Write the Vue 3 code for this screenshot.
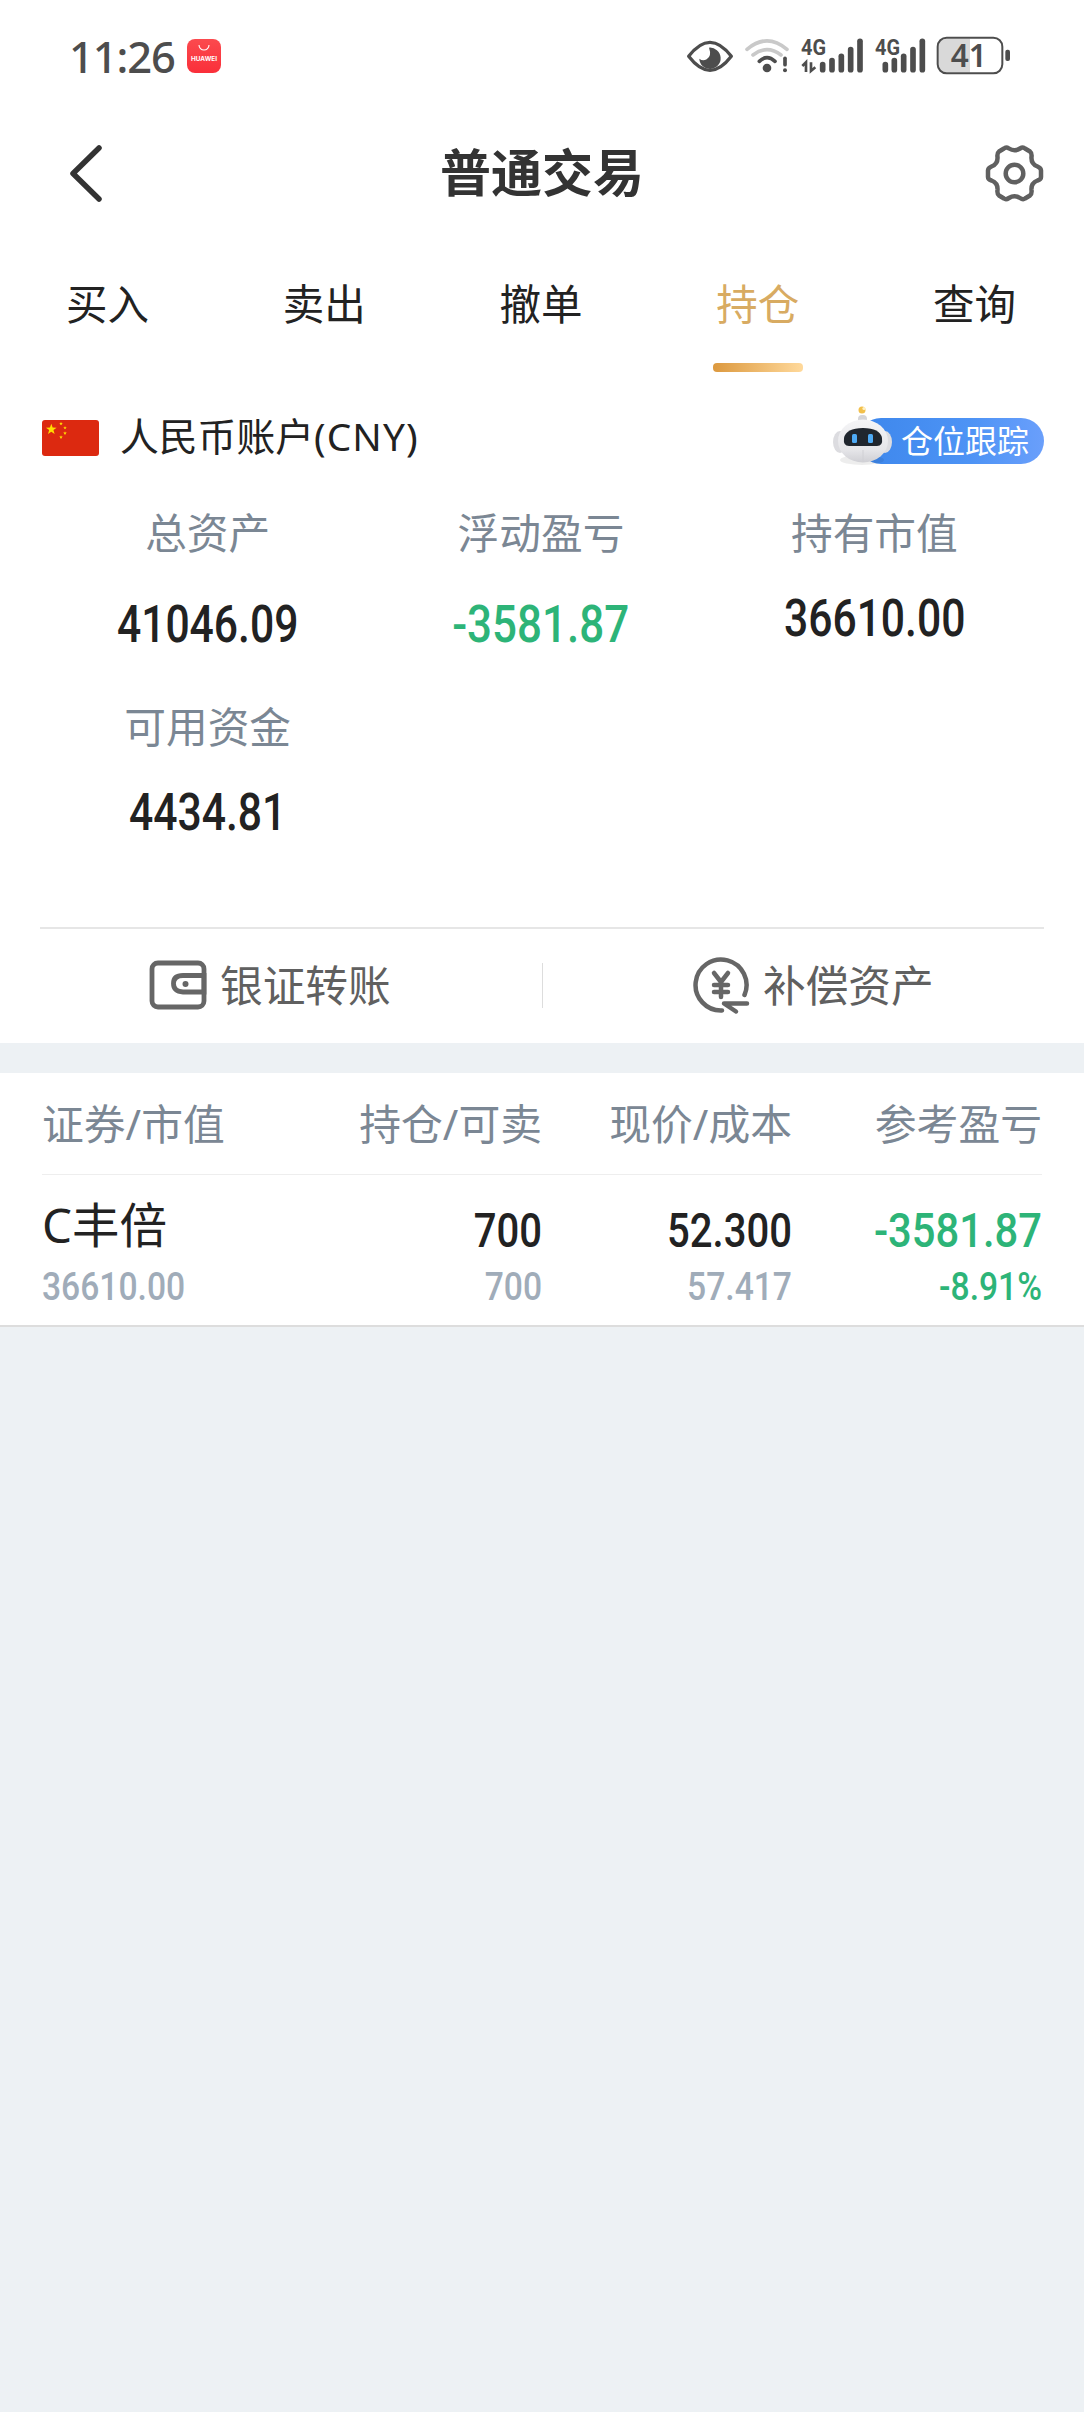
<template>
  <div class="page">
    <header class="status-bar">
      <div class="status-bar__left">
        <span class="status-bar__time">11:26</span>
        <div class="status-bar__app">
          <svg viewBox="0 0 34 34" width="34" height="34">
            <path d="M12 6a5 5 0 0 0 10 0" fill="none" stroke="#fff" stroke-width="1.1" />
            <text x="17" y="21.6" text-anchor="middle" textLength="26" lengthAdjust="spacingAndGlyphs" class="status-bar__brand">HUAWEI</text>
          </svg>
        </div>
      </div>
      <svg class="status-bar__icons" viewBox="0 0 1080 240" width="360" height="80">
        <!-- eye -->
        <path d="M56 109Q120 25 184 109Q120 193 56 109Z" fill="none" stroke="#4d4d4d" stroke-width="10" stroke-linejoin="round" />
        <path d="M117 83A32 32 0 1 1 88 116Q98 124 110 118Q126 108 117 83Z" fill="#4d4d4d" />
        <!-- wifi -->
        <g fill="none" stroke-width="11" stroke-linecap="round">
          <path d="M231 88Q291 37 351 88" stroke="#c9c9c9" />
          <path d="M249 105Q291 73 333 105" stroke="#c9c9c9" />
          <path d="M268 124Q291 102 315 124" stroke="#4d4d4d" />
          <path d="M345 115V134" stroke="#4d4d4d" />
        </g>
        <circle cx="291" cy="144" r="13" fill="#4d4d4d" />
        <circle cx="345" cy="151" r="6" fill="#4d4d4d" />
        <!-- cellular -->
        <text x="393" y="105" textLength="75" lengthAdjust="spacingAndGlyphs" class="status-bar__net">4G</text>
        <text x="615" y="105" textLength="75" lengthAdjust="spacingAndGlyphs" class="status-bar__net">4G</text>
        <path d="M397 138L408 127V156M423 127V153L436 142" fill="none" stroke="#4d4d4d" stroke-width="8" />
        <g stroke="#4d4d4d" stroke-width="17" stroke-linecap="round">
          <path v-for="bar in signalBars" :key="bar.x" :d="`M${bar.x} ${bar.y}V149`" />
        </g>
        <!-- battery -->
        <path d="M900 57H828Q805 57 805 80V134Q805 157 828 157H900Z" fill="#d9d9d9" />
        <rect x="803" y="53" width="194" height="107" rx="27" fill="none" stroke="#4d4d4d" stroke-width="6" />
        <rect x="1006" y="89" width="14" height="34" rx="6" fill="#4d4d4d" />
        <text x="842" y="141" textLength="108" lengthAdjust="spacingAndGlyphs" class="status-bar__level">41</text>
      </svg>
    </header>

    <nav class="title-bar">
      <svg viewBox="0 0 60 60" width="60" height="60">
        <path d="M44 5L18 30.500L44 56" fill="none" stroke="#333" stroke-width="5.500" stroke-linecap="round" stroke-linejoin="round" />
      </svg>
      <h1 class="title-bar__title">普通交易</h1>
      <svg viewBox="0 0 60 60" width="60" height="60">
        <path d="M20 5.500Q22 3.500 25 5.500Q30.500 9 36 5.500Q39 3.500 41 5.500L46 8.500Q48 10 47.500 14Q47 21 53.500 23.500Q57 25 57 27.500V34Q57 36.500 53.500 37.500Q47 40 47.500 47Q48 51 46 52.500L41 55.500Q39 57 36 55Q30.500 51.500 25 55Q22 57 20 55.500L15 52.500Q13 51 13.500 47Q14 40 7.500 37.500Q4 36.500 4 34V27.500Q4 25 7.500 23.500Q14 21 13.500 14Q13 10 15 8.500Z" fill="none" stroke="#606060" stroke-width="4.500" stroke-linejoin="round" />
        <circle cx="30.500" cy="30.500" r="8.800" fill="none" stroke="#606060" stroke-width="4.500" />
      </svg>
    </nav>

    <div class="tabs">
      <div
        class="tabs__item"
        :class="{ 'tabs__item--active': tab === activeTab }"
        v-for="tab in tabs"
        :key="tab"
      >
        {{ tab }}
      </div>
    </div>

    <section class="account">
      <div class="account__header">
        <svg class="account__flag" viewBox="0 0 57 36" width="57" height="36">
          <rect width="57" height="36" rx="3" fill="#dc2910" />
          <g fill="#ffde00">
            <polygon :points="star(9.3, 9.4, 5.6)" />
            <polygon :points="star(19, 3.7, 1.9)" />
            <polygon :points="star(23, 7.8, 1.9)" />
            <polygon :points="star(23, 13.2, 1.9)" />
            <polygon :points="star(19, 17.2, 1.9)" />
          </g>
        </svg>
        <span class="account__name">人民币账户<span class="account__currency">(CNY)</span></span>
        <div class="tracker">
          <svg class="tracker__robot" viewBox="0 0 66 70" width="66" height="70">
            <defs>
              <linearGradient id="head" x1="0" y1="0" x2="0" y2="1">
                <stop offset="0" stop-color="#f5f5f7" />
                <stop offset=".7" stop-color="#e6e6e9" />
                <stop offset="1" stop-color="#cfcfd4" />
              </linearGradient>
            </defs>
            <ellipse cx="32" cy="60" rx="22" ry="5" fill="#000" opacity=".07" />
            <rect x="28" y="15" width="9" height="12" rx="4" fill="#d5d5d8" />
            <circle cx="32" cy="10" r="3.500" fill="#f2c04c" />
            <circle cx="34" cy="8.500" r="1.600" fill="#fff1c5" />
            <ellipse cx="10" cy="42" rx="7" ry="11" fill="#dcdce0" />
            <ellipse cx="55" cy="42" rx="7" ry="11" fill="#dcdce0" />
            <ellipse cx="33" cy="41" rx="25" ry="21.500" fill="url(#head)" />
            <path d="M33 50V62" stroke="#d0d0d4" stroke-width="1" />
            <path d="M14 38Q16 28 33 28T52 38Q53 46 47 46H19Q13 46 14 38Z" fill="#20262e" />
            <rect x="22" y="34" width="5" height="9" rx="1.500" fill="#4eaaf5" />
            <rect x="38" y="34" width="5" height="9" rx="1.500" fill="#4eaaf5" />
          </svg>
          仓位跟踪
        </div>
      </div>

      <div class="account__stats">
        <div class="stat" v-for="stat in stats" :key="stat.label">
          <div class="stat__label">{{ stat.label }}</div>
          <div class="stat__value" :class="{ 'stat__value--down': stat.down, 'stat__value--raised': stat.raised }">
            {{ stat.value }}
          </div>
        </div>
      </div>

      <div class="actions">
        <div class="actions__item">
          <svg viewBox="0 0 60 60" width="60" height="60">
            <rect x="4" y="8" width="52" height="44" rx="6" fill="none" stroke="#666" stroke-width="4.800" />
            <path d="M56 20.500H35Q25.500 20.500 25.500 28.500T35 37H56Z" fill="none" stroke="#666" stroke-width="4.800" />
            <circle cx="37.500" cy="29" r="3" fill="#666" />
          </svg>
          <span>银证转账</span>
        </div>
        <div class="actions__item">
          <svg viewBox="0 0 60 60" width="60" height="60" fill="none" stroke="#666" stroke-width="4.500" stroke-linecap="round" stroke-linejoin="round">
            <path d="M31 55.500A25.500 25.500 0 1 1 53.500 40" />
            <path d="M23 18L30 27L37 18M30 27V42M23 30H37M23 37H37" />
            <path d="M56 48.500H33L45 56.500" />
          </svg>
          <span>补偿资产</span>
        </div>
      </div>
    </section>

    <section class="holdings">
      <div class="holdings__head">
        <div v-for="column in columns" :key="column">{{ column }}</div>
      </div>
      <div class="holdings__row" v-for="item in holdings" :key="item.name">
        <div class="holdings__cell">
          <div class="holdings__name">{{ item.name }}</div>
          <div class="holdings__sub">{{ item.marketValue }}</div>
        </div>
        <div class="holdings__cell">
          <div class="holdings__main">{{ item.amount }}</div>
          <div class="holdings__sub">{{ item.available }}</div>
        </div>
        <div class="holdings__cell">
          <div class="holdings__main">{{ item.price }}</div>
          <div class="holdings__sub">{{ item.cost }}</div>
        </div>
        <div class="holdings__cell holdings__cell--down">
          <div class="holdings__main">{{ item.profit }}</div>
          <div class="holdings__sub">{{ item.profitRate }}</div>
        </div>
      </div>
    </section>
  </div>
</template>

<script setup>
import { ref } from "vue";

const tabs = ["买入", "卖出", "撤单", "持仓", "查询"];
const activeTab = ref("持仓");

const stats = [
  { label: "总资产", value: "41046.09" },
  { label: "浮动盈亏", value: "-3581.87", down: true },
  { label: "持有市值", value: "36610.00", raised: true },
  { label: "可用资金", value: "4434.81", raised: true },
];

const columns = ["证券/市值", "持仓/可卖", "现价/成本", "参考盈亏"];

const holdings = [
  {
    name: "C丰倍",
    marketValue: "36610.00",
    amount: "700",
    available: "700",
    price: "52.300",
    cost: "57.417",
    profit: "-3581.87",
    profitRate: "-8.91%",
  },
];

const signalBars = [
  { x: 458, y: 134 },
  { x: 486, y: 122 },
  { x: 514, y: 109 },
  { x: 542, y: 89 },
  { x: 570, y: 64 },
  { x: 646, y: 134 },
  { x: 673, y: 122 },
  { x: 701, y: 109 },
  { x: 729, y: 89 },
  { x: 757, y: 64 },
];

// five-pointed star as a polygon points string
function star(cx, cy, r) {
  return Array.from({ length: 10 }, (_, i) => {
    const radius = i % 2 ? r * 0.4 : r;
    const angle = (i * Math.PI) / 5 - Math.PI / 2;
    return `${cx + radius * Math.cos(angle)},${cy + radius * Math.sin(angle)}`;
  }).join(" ");
}
</script>

<style>
body {
  background: #edf1f4;
}
</style>

<style scoped>
.page {
  width: 1084px;
  min-height: 2412px;
  background: #edf1f4;
  color: #222;
  font-family: "Noto Sans", "Noto Sans CJK SC", sans-serif;
}

svg {
  display: block;
  flex: none;
}

.status-bar {
  display: flex;
  justify-content: space-between;
  height: 100px;
  padding: 20px 54px 0 69px;
  box-sizing: border-box;
  background: #fff;
}

.status-bar__left {
  display: flex;
  height: 74px;
}

.status-bar__time {
  width: 118px;
  color: #4d4d4d;
  font-size: 43.5px;
  font-weight: 500;
  line-height: 73px;
  letter-spacing: -1.1px;
}

.status-bar__app {
  width: 34px;
  height: 34px;
  margin-top: 19px;
  border-radius: 8px;
  background: linear-gradient(#fb4a4e, #fa2f3a);
}

.status-bar__brand {
  fill: #fff;
  font: 700 6.5px Inter, sans-serif;
}

.status-bar__icons {
  width: 360px;
}

.status-bar__net {
  fill: #4d4d4d;
  font: 700 66px Roboto, sans-serif;
}

.status-bar__level {
  fill: #4d4d4d;
  font: 600 96px "Noto Sans", sans-serif;
}

.title-bar {
  display: grid;
  grid-template-columns: 60px 1fr 60px;
  align-items: center;
  height: 146px;
  padding: 0 40px 0 55px;
  background: #fff;
}

.title-bar__title {
  margin: -3px 15px 0 0;
  color: #333;
  font-size: 51px;
  font-weight: 700;
  line-height: 70px;
  text-align: center;
}

.tabs {
  display: grid;
  grid-template-columns: repeat(5, 1fr);
  height: 126px;
  background: #fff;
}

.tabs__item {
  position: relative;
  padding-right: 2px;
  text-align: center;
  font-size: 41.5px;
  line-height: 117px;
}

.tabs__item--active {
  color: #d8ab62;
}

.tabs__item--active::after {
  content: "";
  position: absolute;
  left: 50%;
  bottom: 0;
  width: 90px;
  height: 9px;
  margin-left: -46px;
  border-radius: 4px;
  background: linear-gradient(90deg, #dc993f, #ffd99b);
}

.account {
  height: 671px;
  padding: 0 42px;
  background: #fff;
}

.account__header {
  display: flex;
  align-items: center;
  height: 132px;
}

.account__name {
  margin: -4px 0 0 21px;
  font-size: 38.8px;
  line-height: 60px;
}

.account__currency {
  letter-spacing: 1.1px;
}

.tracker {
  position: relative;
  width: 186px;
  height: 46px;
  margin: 6px -2px 0 auto;
  padding-right: 15px;
  border-radius: 23px;
  background: linear-gradient(90deg, #3d87ec, #4d93f5 60%, #6a9ffb);
  box-sizing: border-box;
  color: #fff;
  font-size: 32px;
  line-height: 46px;
  text-align: right;
}

.tracker__robot {
  position: absolute;
  left: -28px;
  top: -18px;
}

.account__stats {
  display: grid;
  grid-template-columns: repeat(3, 1fr);
  grid-template-rows: 194px 229px;
}

.stat {
  text-align: center;
}

.stat__label {
  margin: -1px 2px 0 0;
  color: #7b8794;
  font-size: 41.7px;
  line-height: 60px;
}

.stat__value {
  margin: 32px 2px 0 0;
  font-family: Roboto, sans-serif;
  font-size: 52px;
  font-weight: 500;
  line-height: 60px;
  transform: scaleX(0.82);
}

.stat__value--raised {
  margin-top: 26px;
}

.stat__value--down {
  transform: scaleX(0.845);
}

.stat__value--down,
.holdings__cell--down {
  color: #2db478;
}

.actions {
  display: grid;
  grid-template-columns: 1fr 1fr;
  height: 115px;
  margin: 0 -2px;
  border-top: 2px solid #e6e6e6;
}

.actions__item {
  display: flex;
  align-items: center;
  gap: 12px;
  height: 112px;
  padding-left: 108px;
  color: #606060;
  font-size: 42.7px;
}

.actions__item span {
  margin-top: -3px;
}

.actions__item + .actions__item {
  position: relative;
  padding-left: 149px;
}

.actions__item + .actions__item::before {
  content: "";
  position: absolute;
  left: 0;
  top: 34px;
  width: 1px;
  height: 45px;
  background: #ddd;
}

.holdings {
  margin-top: 30px;
  padding: 0 42px;
  border-bottom: 2px solid #ddd;
  background: #fff;
}

.holdings__head,
.holdings__row {
  display: grid;
  grid-template-columns: 250px 250px 250px 250px;
  text-align: right;
}

.holdings__head {
  height: 101px;
  border-bottom: 1px solid #eee;
  color: #7b8794;
  font-size: 41.8px;
  line-height: 101px;
}

.holdings__head > :first-child,
.holdings__cell:first-child {
  text-align: left;
}

.holdings__row {
  height: 150px;
}

.holdings__name {
  height: 84px;
  font-size: 47.5px;
  line-height: 100px;
}

.holdings__main {
  height: 84px;
  font-family: Roboto, sans-serif;
  font-size: 47.7px;
  font-weight: 500;
  line-height: 112px;
  transform: scaleX(0.84);
  transform-origin: right;
}

.holdings__cell--down .holdings__main {
  transform: scaleX(0.875);
}

.holdings__sub {
  color: #a0acb9;
  font-family: Roboto, sans-serif;
  font-size: 39.6px;
  font-weight: 500;
  line-height: 55px;
  transform: scaleX(0.85);
  transform-origin: right;
}

.holdings__cell:first-child .holdings__sub {
  transform-origin: left;
}

.holdings__cell--down .holdings__sub {
  color: #2db478;
}
</style>
